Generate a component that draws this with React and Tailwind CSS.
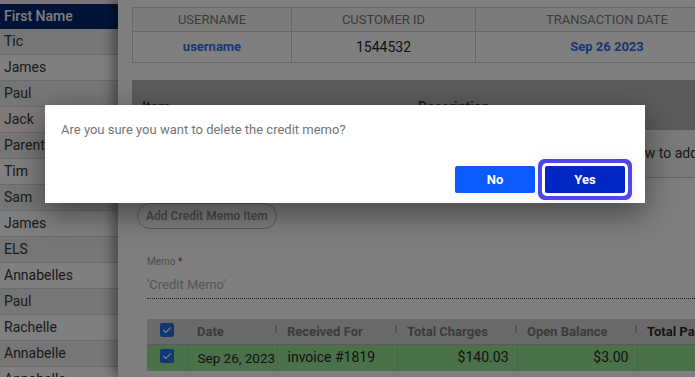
import React from "react";

const names = ["Tic","James","Paul","Jack","Parent","Tim","Sam","James","ELS","Annabelles","Paul","Rachelle","Annabelle","Annabelle"];

function Box() {
  return (
    <span className="inline-flex h-[14px] w-[14px] items-center justify-center rounded-[2px] bg-[#1f6fe6]">
      <svg viewBox="0 0 14 14" className="h-[12px] w-[12px]" fill="none" stroke="#e8eefc" strokeWidth="1.6" strokeLinecap="round" strokeLinejoin="round">
        <path d="M3 7.2l2.6 2.6L11 4.5" />
      </svg>
    </span>
  );
}

function Th({ children, w, dark }) {
  return (
    <th className={`relative h-[25px] ${w} px-[10px] text-left text-[13px] font-bold whitespace-nowrap ${dark ? "text-[#2a2a2a]" : "text-[#777]"}`}>
      {children}
      <span className="absolute right-0 top-[6px] h-[8px] w-[2px] bg-[#aaa]" />
    </th>
  );
}

export default function App() {
  return (
    <div className="relative h-[377px] w-[695px] overflow-hidden bg-white font-['Roboto',sans-serif]">
      <div className="flex h-full">
        {/* sidebar */}
        <div className="w-[118px] shrink-0">
          <div className="h-[4px] bg-[#f6e6e8]" />
          <div className="flex h-[25px] items-center bg-[#00266e] px-[4px] text-[14px] font-medium text-white">First Name</div>
          {names.map((n, i) => (
            <div
              key={i}
              className={`flex h-[26px] items-center border-b border-[#d6d6d6] px-[4px] text-[14px] text-[#333] ${i === 3 ? "bg-[#fff2f4]" : i % 2 === 1 ? "bg-white" : "bg-[#ececec]"}`}
            >
              {n}
            </div>
          ))}
        </div>

        {/* main drawer */}
        <div className="relative z-[1] min-w-0 flex-1 overflow-hidden bg-[#fdfdfd] pl-[14px] pt-[7px] shadow-[-6px_0_10px_rgba(0,0,0,0.35)]">
          <table className="w-[607px] table-fixed border-collapse text-center">
            <thead>
              <tr className="h-[24px] bg-[#f7f7f7] text-[13px] text-[#777]">
                <th className="w-[159px] border border-[#cfcfcf] font-normal">USERNAME</th>
                <th className="w-[184px] border border-[#cfcfcf] font-normal">CUSTOMER ID</th>
                <th className="border border-[#cfcfcf] font-normal">TRANSACTION DATE</th>
              </tr>
            </thead>
            <tbody>
              <tr className="h-[31px] bg-white text-[13px]">
                <td className="border border-[#cfcfcf] font-bold text-[#2f6ee6]">username</td>
                <td className="border border-[#cfcfcf] text-[14px] text-[#222]">1544532</td>
                <td className="border border-[#cfcfcf] font-bold text-[#2f6ee6]">Sep 26 2023</td>
              </tr>
            </tbody>
          </table>

          <div className="mt-[17px] w-[620px]">
            <div className="flex h-[50px] bg-[#b6b6b6] pt-[17px] text-[14px] font-medium text-[#333]">
              <span className="w-[286px] pl-[10px]">Item</span>
              <span>Description</span>
            </div>
            <div className="flex h-[48px] items-center border-b border-[#c4c4c4] bg-[#f4f4f4] pl-[392px] text-[14px] text-[#333] whitespace-nowrap">
              Use the button below to add an item.
            </div>
          </div>

          <button className="ml-[5px] mt-[25px] h-[26px] rounded-full border border-[#b8b8b8] px-[8px] text-[12px] font-bold text-[#9a9a9a]">
            Add Credit Memo Item
          </button>

          <div className="pl-[15px]">
            <div className="mt-[27px] text-[10px] leading-[12px] text-[#999]">
              Memo <span className="text-[#c0182a]">*</span>
            </div>
            <div className="mt-[9px] border-b border-dotted border-[#444] pb-[5px] text-[13px] leading-[16px] text-[#aaa]">
              'Credit Memo'
            </div>

            <table className="mt-[20px] w-[640px] table-fixed border-collapse">
              <thead>
                <tr className="bg-[#d4d4d4]">
                  <th className="h-[25px] w-[40px] text-center"><Box /></th>
                  <Th w="w-[90px]">Date</Th>
                  <Th w="w-[120px]">Received For</Th>
                  <Th w="w-[120px]">Total Charges</Th>
                  <Th w="w-[120px]">Open Balance</Th>
                  <Th dark>Total Paid</Th>
                </tr>
              </thead>
              <tbody>
                <tr className="h-[27px] bg-[#96e296] text-[14px] text-[#222] whitespace-nowrap">
                  <td className="border-t border-r border-[#b4b4b4] text-center"><Box /></td>
                  <td className="overflow-hidden border-r border-t border-[#b4b4b4] pl-[10px] text-[13.5px]">Sep 26, 2023</td>
                  <td className="border-r border-t border-[#b4b4b4] pl-[10px]">invoice #1819</td>
                  <td className="border-r border-t border-[#b4b4b4] pr-[8px] text-right">$140.03</td>
                  <td className="border-r border-t border-[#b4b4b4] pr-[8px] text-right">$3.00</td>
                  <td className="border-t border-[#b4b4b4]"></td>
                </tr>
              </tbody>
            </table>
          </div>
        </div>
      </div>

      {/* backdrop */}
      <div className="absolute inset-0 z-10 bg-black/50" />

      {/* dialog */}
      <div className="absolute left-[45px] top-[105px] z-20 flex h-[98px] w-[600px] flex-col bg-white shadow-[0_10px_30px_rgba(0,0,0,0.45)]">
        <p className="pl-[16px] pt-[15px] text-[13px] leading-[20px] text-[#757575]">
          Are you sure you want to delete the credit memo?
        </p>
        <div className="mt-auto flex justify-end gap-[10px] pb-[10px] pr-[20px]">
          <button className="h-[27px] w-[80px] rounded-[2px] bg-[#0b5cff] text-[13px] font-bold text-white">No</button>
          <button className="h-[27px] w-[80px] rounded-[2px] bg-[#0026c4] text-[13px] font-bold text-white ring-4 ring-[#4f46e5] ring-offset-[3px] ring-offset-white shadow-[0_0_14px_rgba(79,70,229,0.55)]">Yes</button>
        </div>
      </div>
    </div>
  );
}
